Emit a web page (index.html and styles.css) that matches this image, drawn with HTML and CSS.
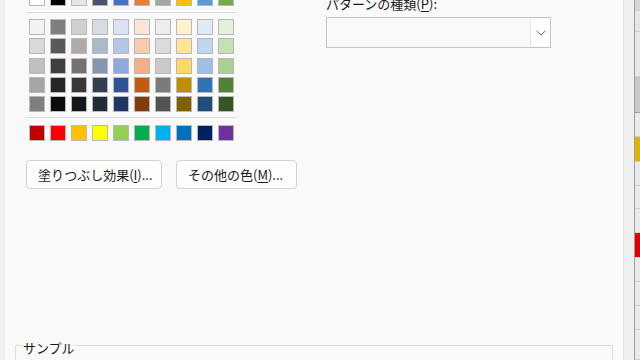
FILE: index.html
```html
<!DOCTYPE html>
<html lang="ja">
<head>
<meta charset="utf-8">
<link rel="stylesheet" href="styles.css">
</head>
<body>
<div class="window">
  <div class="edge-left"></div>
  <div class="dialog">
    <div class="columns">
      <div class="fill-col">
        <div class="swatches">
          <span class="sw" style="background:#ffffff"></span><span class="sw" style="background:#000000"></span><span class="sw" style="background:#e7e6e6"></span><span class="sw" style="background:#44546a"></span><span class="sw" style="background:#4472c4"></span><span class="sw" style="background:#ed7d31"></span><span class="sw" style="background:#a5a5a5"></span><span class="sw" style="background:#ffc000"></span><span class="sw" style="background:#5b9bd5"></span><span class="sw" style="background:#70ad47"></span>
        </div>
        <div class="sep sep-top"></div>
        <div class="swatches tints">
          <span class="sw" style="background:#f2f2f2"></span><span class="sw" style="background:#7f7f7f"></span><span class="sw" style="background:#d0cece"></span><span class="sw" style="background:#d6dce4"></span><span class="sw" style="background:#d9e1f2"></span><span class="sw" style="background:#fce4d6"></span><span class="sw" style="background:#ededed"></span><span class="sw" style="background:#fff2cc"></span><span class="sw" style="background:#ddebf7"></span><span class="sw" style="background:#e2efda"></span>
          <span class="sw" style="background:#d9d9d9"></span><span class="sw" style="background:#595959"></span><span class="sw" style="background:#aeaaaa"></span><span class="sw" style="background:#acb9ca"></span><span class="sw" style="background:#b4c6e7"></span><span class="sw" style="background:#f8cbad"></span><span class="sw" style="background:#dbdbdb"></span><span class="sw" style="background:#ffe699"></span><span class="sw" style="background:#bdd7ee"></span><span class="sw" style="background:#c6e0b4"></span>
          <span class="sw" style="background:#bfbfbf"></span><span class="sw" style="background:#404040"></span><span class="sw" style="background:#757171"></span><span class="sw" style="background:#8497b0"></span><span class="sw" style="background:#8ea9db"></span><span class="sw" style="background:#f4b084"></span><span class="sw" style="background:#c9c9c9"></span><span class="sw" style="background:#ffd966"></span><span class="sw" style="background:#9bc2e6"></span><span class="sw" style="background:#a9d08e"></span>
          <span class="sw" style="background:#a6a6a6"></span><span class="sw" style="background:#262626"></span><span class="sw" style="background:#3a3838"></span><span class="sw" style="background:#333f4f"></span><span class="sw" style="background:#305496"></span><span class="sw" style="background:#c65911"></span><span class="sw" style="background:#7b7b7b"></span><span class="sw" style="background:#bf8f00"></span><span class="sw" style="background:#2f75b5"></span><span class="sw" style="background:#548235"></span>
          <span class="sw" style="background:#808080"></span><span class="sw" style="background:#0d0d0d"></span><span class="sw" style="background:#161616"></span><span class="sw" style="background:#222b35"></span><span class="sw" style="background:#203764"></span><span class="sw" style="background:#833c0c"></span><span class="sw" style="background:#525252"></span><span class="sw" style="background:#806000"></span><span class="sw" style="background:#1f4e78"></span><span class="sw" style="background:#375623"></span>
        </div>
        <div class="sep sep-std"></div>
        <div class="swatches">
          <span class="sw" style="background:#c00000"></span><span class="sw" style="background:#ff0000"></span><span class="sw" style="background:#ffc000"></span><span class="sw" style="background:#ffff00"></span><span class="sw" style="background:#92d050"></span><span class="sw" style="background:#00b050"></span><span class="sw" style="background:#00b0f0"></span><span class="sw" style="background:#0070c0"></span><span class="sw" style="background:#002060"></span><span class="sw" style="background:#7030a0"></span>
        </div>
        <div class="buttons">
          <button class="btn btn-effect">塗りつぶし効果(<u>I</u>)...</button>
          <button class="btn btn-more">その他の色(<u>M</u>)...</button>
        </div>
      </div>
      <div class="pattern-col">
        <div class="label">パターンの種類(<u>P</u>):</div>
        <div class="combo">
          <div class="combo-value"></div>
          <div class="combo-btn">
            <svg width="10" height="6" viewBox="0 0 10 6"><path d="M0.5 0.8 L5 5 L9.5 0.8" fill="none" stroke="#6a6a6a" stroke-width="1"/></svg>
          </div>
        </div>
      </div>
    </div>
    <fieldset class="sample"><legend>サンプル</legend></fieldset>
  </div>
  <div class="band"></div>
  <div class="sheet">
    <div class="cell c1"></div>
    <div class="cell c2"></div>
    <div class="cell c3"></div>
    <div class="cell c4"></div>
    <div class="cell c5"></div>
    <div class="cell yellow"></div>
    <div class="cell c6"></div>
    <div class="cell c7"></div>
    <div class="cell c8"></div>
    <div class="cell red"></div>
    <div class="cell c9"></div>
    <div class="cell c10"></div>
    <div class="cell c11"></div>
    <div class="cell c12"></div>
  </div>
</div>
</body>
</html>
```

FILE: styles.css
```css
html, body {
  margin: 0;
  padding: 0;
  width: 640px;
  height: 360px;
  overflow: hidden;
  background: #f9f9f9;
  font-family: "Noto Sans CJK JP", "Noto Sans", sans-serif;
  font-size: 13px;
  color: #1b1b1b;
}

.window {
  display: flex;
  width: 640px;
  height: 360px;
  overflow: hidden;
}

.edge-left {
  flex: 0 0 5px;
  background: #efefef;
}

.dialog {
  flex: 0 0 619px;
  box-sizing: border-box;
  background: #f9f9f9;
  border-right: 1px solid #e4e4e4;
  display: flex;
  flex-direction: column;
}

.columns {
  display: grid;
  grid-template-columns: 300px 225px;
  padding-left: 21px;
  margin-top: -10px;
}

.fill-col {
  display: flex;
  flex-direction: column;
}

.swatches {
  display: grid;
  grid-template-columns: repeat(10, 16px);
  column-gap: 5px;
  margin-left: 3px;
}

.tints {
  row-gap: 3.35px;
}

.sw {
  display: block;
  width: 16px;
  height: 16px;
  box-sizing: border-box;
  border: 1px solid #b8b8b8;
}

.sep {
  width: 211px;
  height: 1px;
  background: #dcdcdc;
}

.sep-top {
  margin: 6px 0 6px;
}

.sep-std {
  margin: 5px 0 7px;
}

.buttons {
  display: flex;
  gap: 14px;
  margin-top: 19px;
}

.btn {
  height: 29px;
  box-sizing: border-box;
  border: 1px solid #d2d2d2;
  border-radius: 4px;
  background: #fdfdfd;
  font-family: inherit;
  font-size: 13px;
  color: #1b1b1b;
  text-align: left;
  padding: 0 0 0 11px;
  white-space: nowrap;
}

.btn-effect { width: 136px; }
.btn-more { width: 121px; }

u {
  text-underline-offset: 2px;
}

.pattern-col {
  display: flex;
  flex-direction: column;
  padding-top: 4px;
}

.label {
  line-height: 20px;
  height: 20px;
}

.combo {
  margin-top: 3px;
  width: 225px;
  height: 31px;
  box-sizing: border-box;
  border: 1px solid #c4c4c4;
  display: flex;
  background: #f9f9f9;
}

.combo-value {
  flex: 1;
}

.combo-btn {
  flex: 0 0 19px;
  background: #ffffff;
  border-left: 1px solid #e6e6e6;
  display: flex;
  align-items: center;
  justify-content: center;
  margin: 1px 0;
}

.sample {
  margin: 145px 10px 0 10px;
  padding: 0 7px;
  border: 1px solid #dedede;
  border-bottom: none;
  flex: 1;
  min-height: 40px;
}

.sample legend {
  padding: 6px 0 0;
  line-height: 16px;
}

.band {
  flex: 0 0 10px;
  background: #efefef;
  border-right: 1px solid #9e9e9e;
}

.sheet {
  flex: 1;
  display: flex;
  flex-direction: column;
  background: #e8e8e8;
}

.cell {
  box-sizing: border-box;
  border-bottom: 1px solid #d0d0d0;
}

.c1 { height: 11px; background: #d6d6d6; }
.c2 { height: 21px; background: #e6e6e6; }
.c3 { height: 45px; background: #e8e8e8; }
.c4 { height: 36px; background: #c9c9c9; border-bottom-color: #9e9e9e; }
.c5 { height: 24px; background: #eaeaea; }
.yellow { height: 25px; background: #e3b300; }
.c6 { height: 24px; background: #eaeaea; }
.c7 { height: 24px; background: #eaeaea; }
.c8 { height: 24px; background: #eaeaea; }
.red { height: 25px; background: #e00000; }
.c9 { height: 24px; background: #eaeaea; }
.c10 { height: 24px; background: #eaeaea; }
.c11 { height: 24px; background: #eaeaea; }
.c12 { height: 30px; background: #eaeaea; }
```
